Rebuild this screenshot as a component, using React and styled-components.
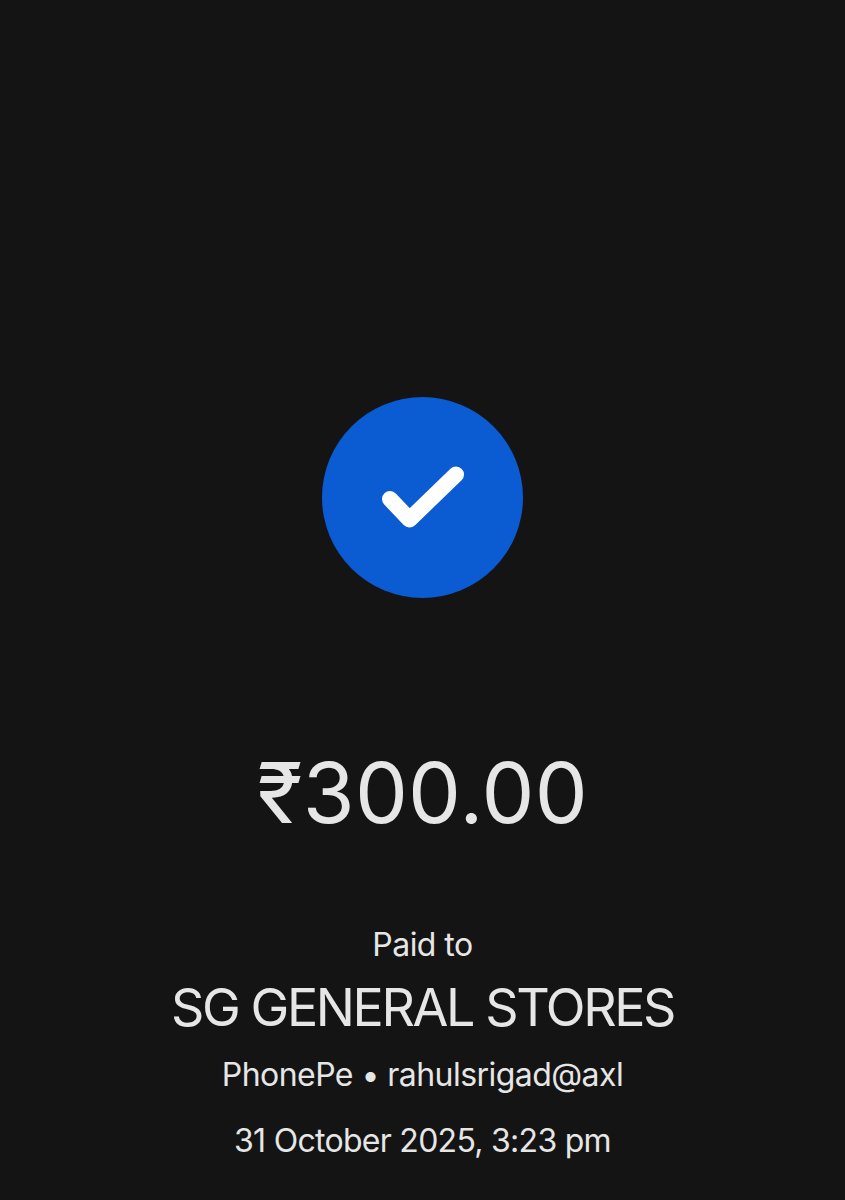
import styled, { createGlobalStyle } from "styled-components";

const GlobalStyle = createGlobalStyle`
  html, body {
    margin: 0;
    padding: 0;
    background: #141414;
  }
`;

const Screen = styled.main`
  width: 845px;
  height: 1200px;
  overflow: hidden;
  padding-top: 397px;
  box-sizing: border-box;
  display: flex;
  flex-direction: column;
  align-items: center;
  background: #141414;
  color: #e6e6e6;
  font-family: "Inter", "Liberation Sans", sans-serif;
  font-weight: 400;
`;

const StatusCircle = styled.div`
  width: 201px;
  height: 201px;
  border-radius: 50%;
  background: #0b5bd3;
  display: flex;
  align-items: center;
  justify-content: center;
`;

const Amount = styled.div`
  margin-top: 150px;
  font-size: 84px;
  line-height: 90px;
  letter-spacing: 0.2px;
  white-space: nowrap;
`;

const Details = styled.div`
  margin-top: 85px;
  display: flex;
  flex-direction: column;
  align-items: center;
`;

const Label = styled.div`
  font-size: 32px;
  line-height: 44px;
  letter-spacing: -0.55px;
  white-space: nowrap;
`;

const Merchant = styled.div`
  font-size: 52px;
  line-height: 64px;
  letter-spacing: -2.4px;
  margin: 9px 0 13px;
  white-space: nowrap;
`;

const DateLine = styled(Label)`
  margin-top: 22px;
  letter-spacing: -0.72px;
`;

function Check() {
  return (
    <svg width="101" height="101" viewBox="0 0 101 101" fill="none">
      <path
        d="M18 52 L37.5 72.5 L84 27.5"
        stroke="#fff"
        strokeWidth="16"
        strokeLinecap="round"
        strokeLinejoin="round"
      />
    </svg>
  );
}

export default function App() {
  return (
    <>
      <GlobalStyle />
      <Screen>
        <StatusCircle>
          <Check />
        </StatusCircle>
        <Amount>₹300.00</Amount>
        <Details>
          <Label>Paid to</Label>
          <Merchant>SG GENERAL STORES</Merchant>
          <Label>PhonePe • rahulsrigad@axl</Label>
          <DateLine>31 October 2025, 3:23 pm</DateLine>
        </Details>
      </Screen>
    </>
  );
}
